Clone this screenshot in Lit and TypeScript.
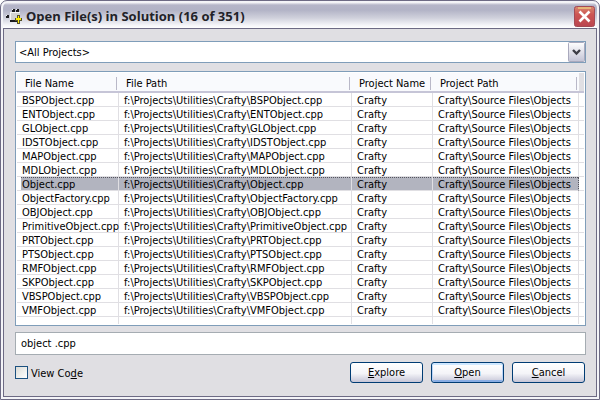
import { LitElement, html, css } from "lit";
import { customElement, state } from "lit/decorators.js";
import { classMap } from "lit/directives/class-map.js";

const FILES = [
  "BSPObject", "ENTObject", "GLObject", "IDSTObject", "MAPObject", "MDLObject",
  "Object", "ObjectFactory", "OBJObject", "PrimitiveObject", "PRTObject",
  "PTSObject", "RMFObject", "SKPObject", "VBSPObject", "VMFObject",
].map((name) => `${name}.cpp`);

@customElement("app-root")
export class AppRoot extends LitElement {
  @state() private selected = "Object.cpp";

  static styles = css`
    :host {
      display: block;
      background: #ffffff;
      font: 11px/14px "DejaVu Sans Condensed", "Noto Sans", sans-serif;
      color: #000000;
    }
    * { box-sizing: border-box; }
    .window {
      display: flex;
      flex-direction: column;
      min-height: 100vh;
      padding: 1px 2px 2px;
      border: 1px solid #6d6a84;
      border-radius: 7px 7px 0 0;
      background: #f4f4f8;
    }
    .title {
      display: flex;
      align-items: center;
      gap: 4px;
      height: 26px;
      padding: 2px 2px 0 3px;
      border-radius: 6px 6px 0 0;
      background: linear-gradient(#ffffff 0, #b5b5c8 3px, #b2b3c6 8px, #d0d1dc 16px, #f4f4f8 23px, #ffffff 26px);
    }
    .title h1 {
      flex: 1;
      margin: 0;
      font: bold 13px/18px "Open Sans", "Noto Sans", sans-serif;
      color: #222228;
    }
    .close {
      width: 21px;
      height: 21px;
      padding: 0;
      border: 0;
      background: none;
    }
    svg { display: block; }
    .body {
      flex: 1;
      display: flex;
      flex-direction: column;
      border: 1px solid #6d6a84;
      background: #e0dfe3;
      padding: 12px 10px 13px 11px;
    }
    .combo { position: relative; }
    .combo select {
      display: block;
      width: 100%;
      height: 22px;
      padding: 2px 3px 0;
      border: 1px solid #7f9db9;
      border-radius: 0;
      background: #ffffff;
      font: inherit;
      color: inherit;
      appearance: none;
    }
    .drop {
      position: absolute;
      top: 1px;
      right: 1px;
      pointer-events: none;
    }
    .list {
      flex: 1;
      margin-top: 8px;
      padding: 1px;
      border: 1px solid #7f9db9;
      background: #ffffff;
    }
    table {
      width: 100%;
      border-collapse: separate;
      border-spacing: 0;
      table-layout: fixed;
    }
    .c1 { width: 102px; }
    .c2 { width: 233px; }
    .c3 { width: 81px; }
    .c4 { width: 146px; }
    th {
      height: 20px;
      padding: 4px 7px 0;
      border-bottom: 2px solid #c6c5d7;
      background: #f9fafd linear-gradient(#b9b8c8, #b9b8c8) no-repeat right 2px top 4px / 1px 13px;
      font-weight: normal;
      text-align: left;
      white-space: nowrap;
    }
    th:first-child { padding-left: 8px; }
    td {
      height: 14px;
      padding: 2px 0 0 5px;
      border-right: 1px solid #e0dfe3;
      border-bottom: 1px solid #e0dfe3;
      line-height: 11px;
      white-space: nowrap;
    }
    th:last-child { background: #e0dfe3; }
    td:last-child { border-right: 0; padding: 0; }
    .selected td:not(:last-child) {
      background: linear-gradient(90deg, #55555e 50%, #b2b4bf 50%) repeat-x left top / 2px 1px, #b2b4bf;
    }
    .selected td:first-child { box-shadow: inset 4px 0 #ffffff; }
    .selected td:nth-child(4) { border-right: 1px dotted #55555e; }
    .tail td { height: 7px; padding: 0; border-bottom: 0; }
    .query {
      height: 23px;
      margin-top: 6px;
      padding: 0 5px 1px;
      border: 1px solid #a5acb2;
      border-radius: 0;
      background: #ffffff;
      font: inherit;
      color: inherit;
    }
    .footer {
      display: flex;
      align-items: center;
      gap: 8px;
      margin-top: 7px;
      padding-right: 1px;
    }
    .check {
      display: flex;
      align-items: center;
      gap: 3px;
      margin-right: auto;
    }
    .check span { padding-top: 2px; }
    .check input {
      width: 13px;
      height: 13px;
      margin: 0;
      border: 1px solid #1c5180;
      background: linear-gradient(135deg, #dcdcd7, #ffffff);
      appearance: none;
    }
    .check input:checked { background: #1c5180; }
    .push {
      width: 73px;
      height: 21px;
      padding: 1px 0 0;
      border: 1px solid #003c74;
      border-radius: 3px;
      background: linear-gradient(#ffffff, #f4f4f8 55%, #c6c5d7);
      font: inherit;
      color: inherit;
    }
    .default { box-shadow: inset 0 2px #cee7ff, inset 1px 0 #bcd4f6, inset -1px 0 #bcd4f6, inset 0 -2px #89ade4; }
  `;

  render() {
    return html`
      <main class="window">
        <header class="title">
          <svg width="16" height="16" viewBox="0 0 16 16" shape-rendering="crispEdges" aria-hidden="true">
            <path fill="#1c1c20" d="M6 1h3v3H6zM10 1h3v3h-3zM0 7h3v3H0zM4 12h8v2H4z" />
            <path fill="#f4f4f4" d="M6 1h1v1H6zM10 1h1v1h-1zM0 7h1v1H0z" />
            <path fill="#f4f4f4" d="M4 4h10v8H4z" />
            <path fill="#d2d2d2" d="M5 5h9v7H5z" />
            <path fill="#55502a" d="M11 7h3v3h2v3h-2v3h-3v-3H9v-3h2z" />
            <path fill="#ffee00" d="M12 8h1v2h2v2h-2v3h-1v-3h-2v-2h2z" />
          </svg>
          <h1>Open File(s) in Solution (16 of 351)</h1>
          <button class="close" aria-label="Close">
            <svg width="21" height="21" viewBox="0 0 21 21">
              <defs>
                <linearGradient id="red" x2="0" y2="1">
                  <stop offset="0" stop-color="#d9886f" />
                  <stop offset="0.4" stop-color="#cd5553" />
                  <stop offset="1" stop-color="#b94550" />
                </linearGradient>
              </defs>
              <rect x="0.5" y="0.5" width="20" height="20" rx="2" fill="url(#red)" stroke="#a34a55" />
              <path d="M4 2h13" stroke="#e6b578" stroke-width="2" />
              <path d="M5.500 5.500l10 10M15.500 5.500l-10 10" stroke="#fff" stroke-width="2.600" />
            </svg>
          </button>
        </header>
        <section class="body">
          <div class="combo">
            <select aria-label="Project"><option>&lt;All Projects&gt;</option></select>
            <svg class="drop" width="17" height="20" viewBox="0 0 17 20" aria-hidden="true">
              <defs>
                <linearGradient id="silver" x2="0" y2="1">
                  <stop offset="0" stop-color="#ffffff" />
                  <stop offset="1" stop-color="#c3c3d5" />
                </linearGradient>
              </defs>
              <rect x="0.500" y="0.500" width="16" height="19" rx="1" fill="url(#silver)" stroke="#a9a9bd" />
              <path d="M5 8l3.500 3.500L12 8" fill="none" stroke="#3d3d46" stroke-width="2.400" />
            </svg>
          </div>
          <div class="list">
            <table>
              <colgroup>
                <col class="c1" /><col class="c2" /><col class="c3" /><col class="c4" /><col />
              </colgroup>
              <thead>
                <tr><th>File Name</th><th>File Path</th><th>Project Name</th><th>Project Path</th><th></th></tr>
              </thead>
              <tbody>
                ${FILES.map((file) => html`
                  <tr class=${classMap({ selected: file === this.selected })} @click=${() => (this.selected = file)}>
                    <td>${file}</td>
                    <td>${`f:\\Projects\\Utilities\\Crafty\\${file}`}</td>
                    <td>Crafty</td>
                    <td>${"Crafty\\Source Files\\Objects"}</td>
                    <td></td>
                  </tr>`)}
                <tr class="tail"><td></td><td></td><td></td><td></td><td></td></tr>
              </tbody>
            </table>
          </div>
          <input class="query" type="text" aria-label="File filter" .value=${"object .cpp"} />
          <footer class="footer">
            <label class="check"><input type="checkbox" /><span>View Co<u>d</u>e</span></label>
            <button class="push"><u>E</u>xplore</button>
            <button class="push default"><u>O</u>pen</button>
            <button class="push"><u>C</u>ancel</button>
          </footer>
        </section>
      </main>
    `;
  }
}
